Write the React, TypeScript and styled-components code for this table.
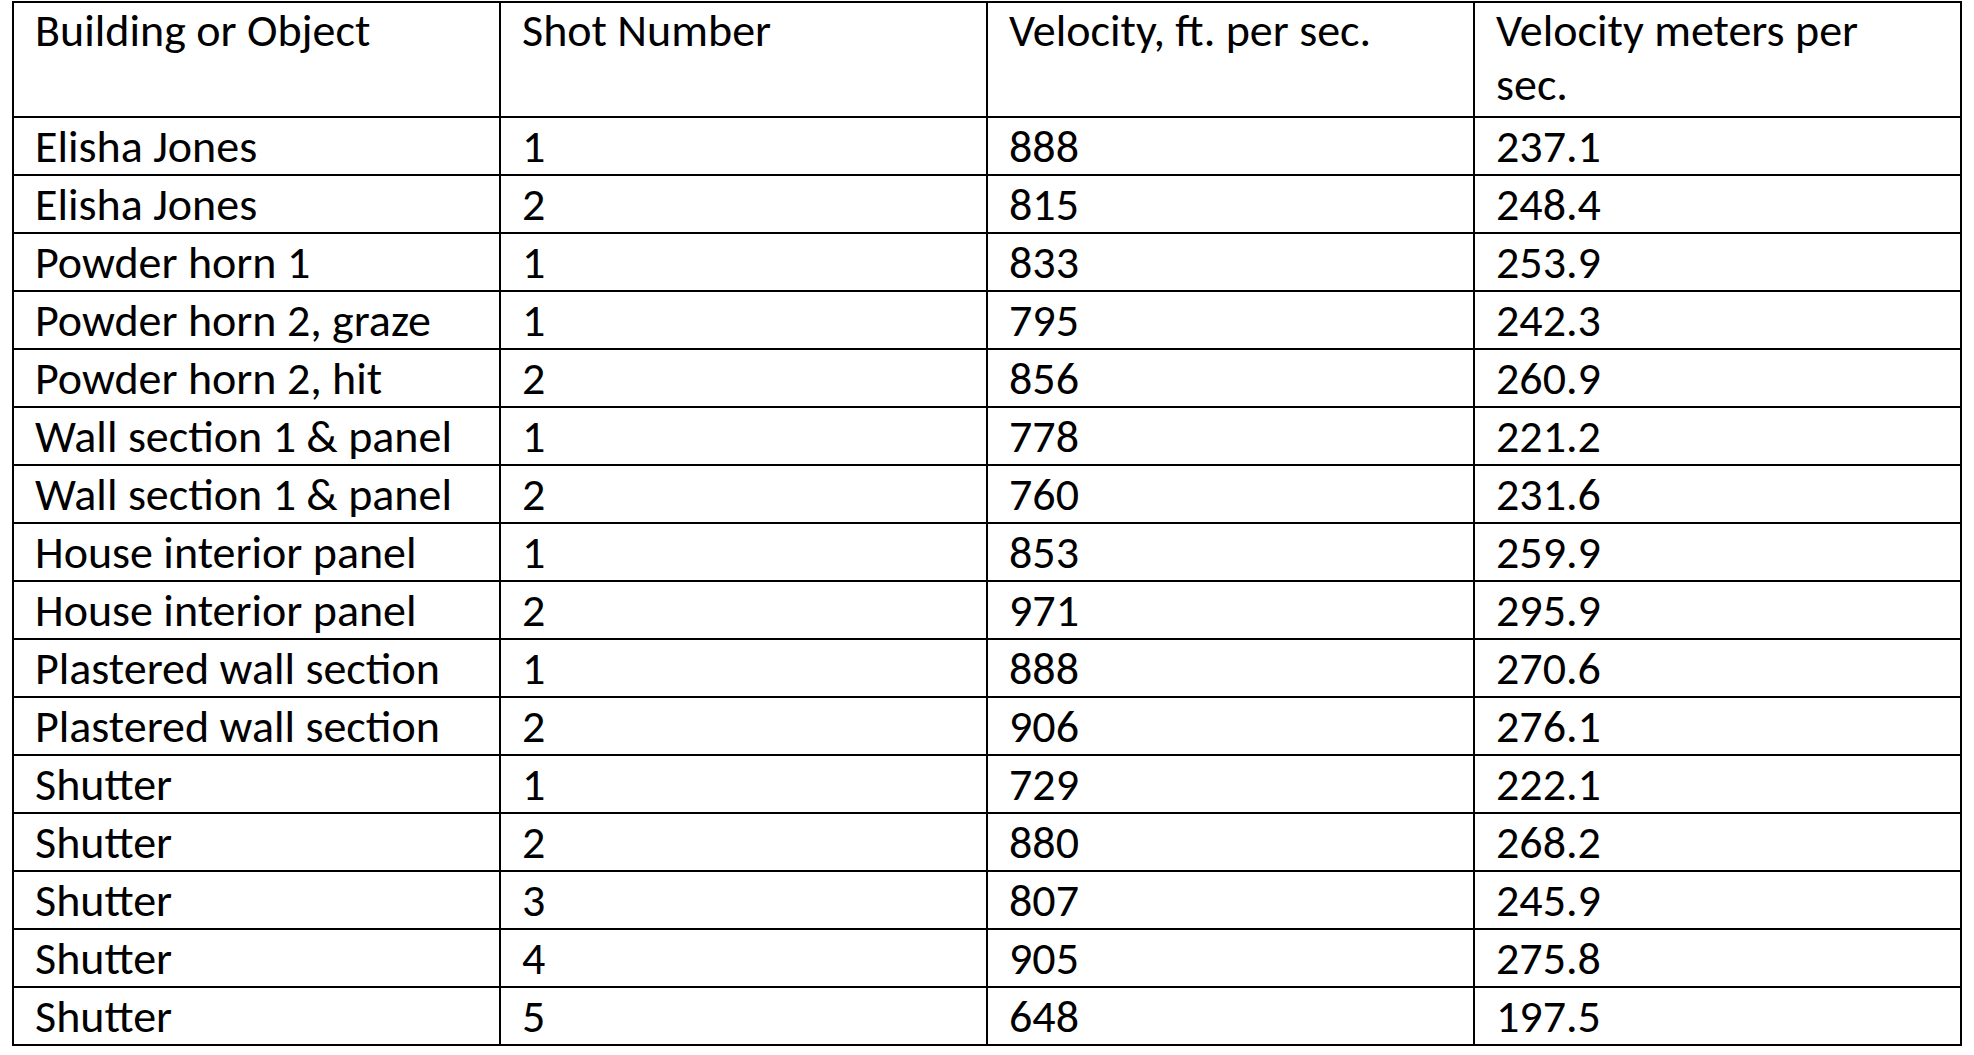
import React from 'react';
import styled, { createGlobalStyle } from 'styled-components';

const GlobalStyle = createGlobalStyle`
    html, body {
        margin: 0;
        padding: 0;
        background: #fff;
    }

    body {
        font-family: Carlito, Calibri, Lato, "Liberation Sans", sans-serif;
        color: #000;
    }
`;

const Page = styled.div`
    padding: 1px 0 0 12px;
`;

const Table = styled.table`
    border-collapse: collapse;
    table-layout: fixed;
    width: 1950px;
    font-size: 46px;
`;

const HeadCell = styled.th`
    border: 2px solid #000;
    height: 113px;
    padding: 0 32px 0 21px;
    font-weight: 400;
    text-align: left;
    vertical-align: top;
    line-height: 54px;
`;

const Cell = styled.td`
    border: 2px solid #000;
    height: 54px;
    padding: 0 12px 0 21px;
    line-height: 56px;
    white-space: nowrap;
`;

interface IShot {
    target: string;
    shot: number;
    fps: number;
    mps: string;
}

const headings = [
    'Building or Object',
    'Shot Number',
    'Velocity, ft. per sec.',
    'Velocity meters per sec.'
];

const shots: IShot[] = [
    { target: 'Elisha Jones', shot: 1, fps: 888, mps: '237.1' },
    { target: 'Elisha Jones', shot: 2, fps: 815, mps: '248.4' },
    { target: 'Powder horn 1', shot: 1, fps: 833, mps: '253.9' },
    { target: 'Powder horn 2, graze', shot: 1, fps: 795, mps: '242.3' },
    { target: 'Powder horn 2, hit', shot: 2, fps: 856, mps: '260.9' },
    { target: 'Wall section 1 & panel', shot: 1, fps: 778, mps: '221.2' },
    { target: 'Wall section 1 & panel', shot: 2, fps: 760, mps: '231.6' },
    { target: 'House interior panel', shot: 1, fps: 853, mps: '259.9' },
    { target: 'House interior panel', shot: 2, fps: 971, mps: '295.9' },
    { target: 'Plastered wall section', shot: 1, fps: 888, mps: '270.6' },
    { target: 'Plastered wall section', shot: 2, fps: 906, mps: '276.1' },
    { target: 'Shutter', shot: 1, fps: 729, mps: '222.1' },
    { target: 'Shutter', shot: 2, fps: 880, mps: '268.2' },
    { target: 'Shutter', shot: 3, fps: 807, mps: '245.9' },
    { target: 'Shutter', shot: 4, fps: 905, mps: '275.8' },
    { target: 'Shutter', shot: 5, fps: 648, mps: '197.5' }
];

const App = () => (
    <React.Fragment>
        <GlobalStyle />
        <Page>
            <Table>
                <thead>
                    <tr>
                        {headings.map(h => <HeadCell key={h}>{h}</HeadCell>)}
                    </tr>
                </thead>
                <tbody>
                    {shots.map((s, i) => (
                        <tr key={`shot-${i}`}>
                            <Cell>{s.target}</Cell>
                            <Cell>{s.shot}</Cell>
                            <Cell>{s.fps}</Cell>
                            <Cell>{s.mps}</Cell>
                        </tr>
                    ))}
                </tbody>
            </Table>
        </Page>
    </React.Fragment>
);

export default App;
